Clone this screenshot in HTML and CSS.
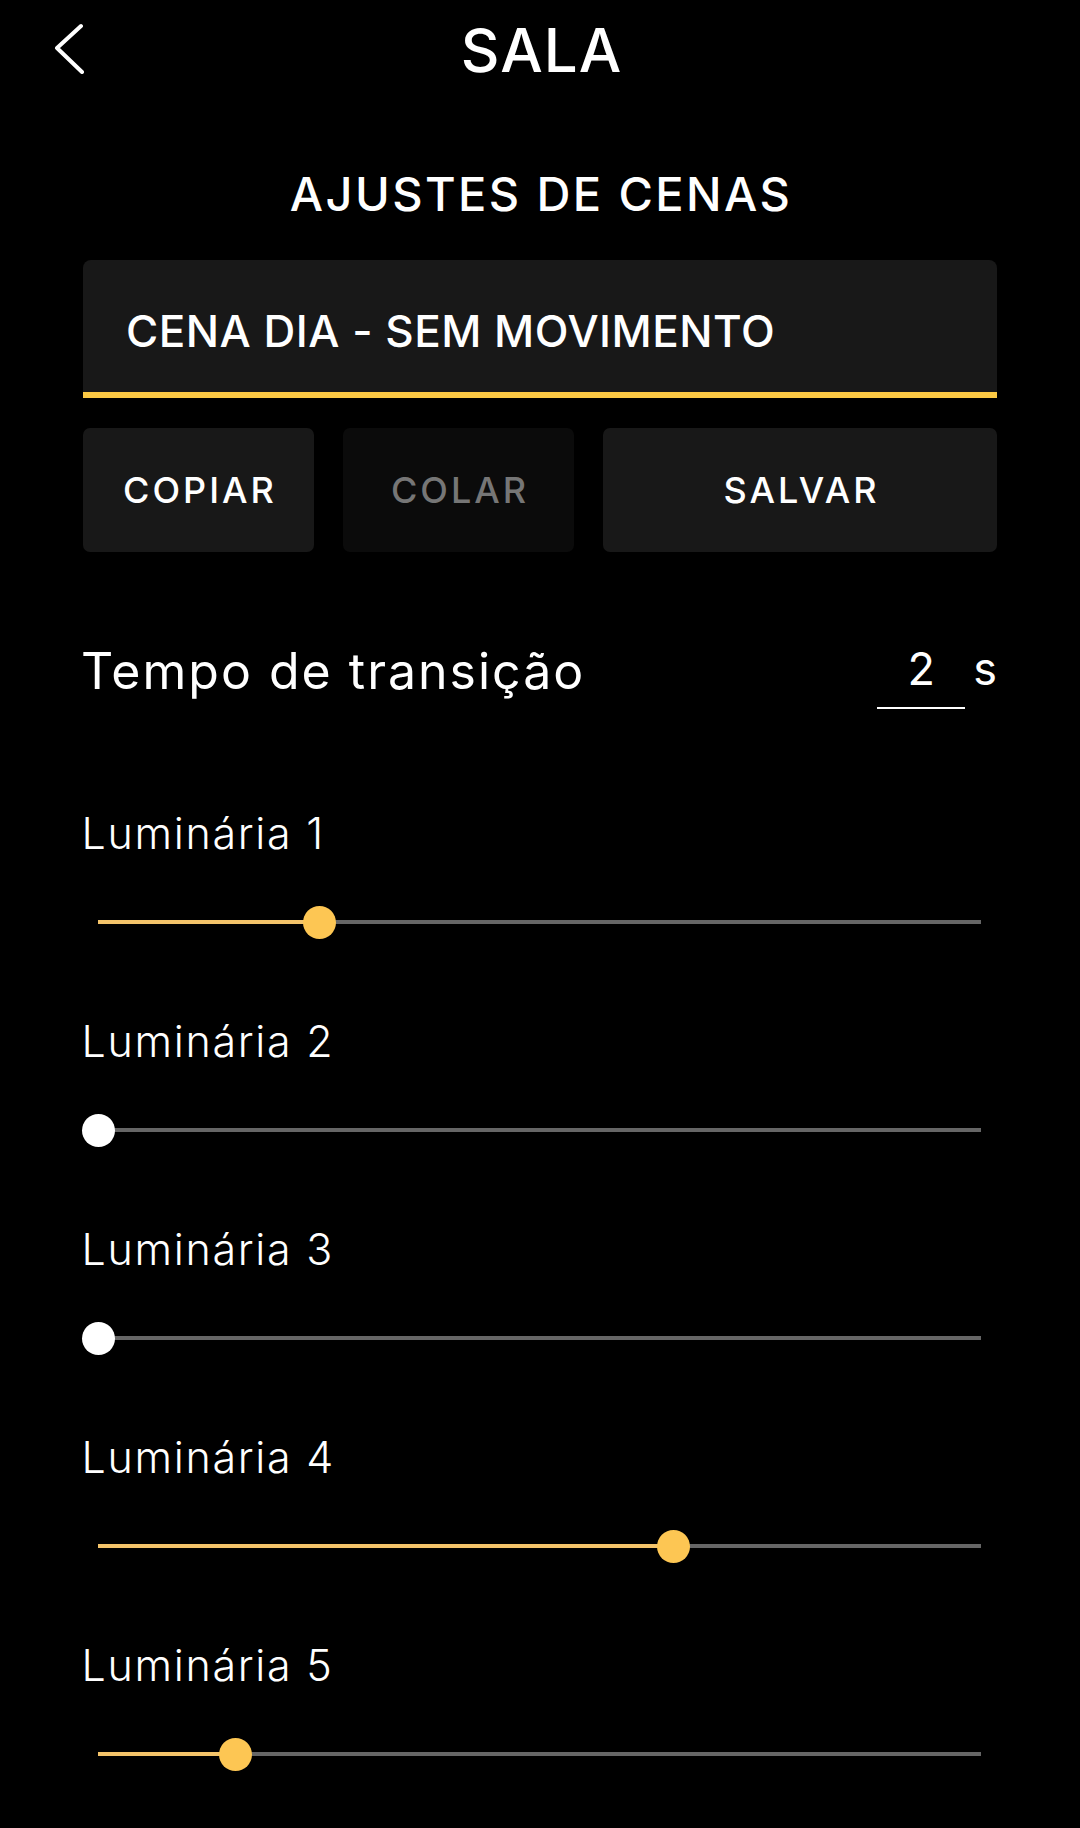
FILE: index.html
```html
<!DOCTYPE html>
<html lang="pt-BR">
<head>
<meta charset="utf-8">
<title>Sala - Ajustes de cenas</title>
<link rel="stylesheet" href="styles.css">
</head>
<body>
<div class="screen">
  <header class="topbar">
    <button class="back" aria-label="Voltar">
      <svg class="back-icon" width="34" height="52" viewBox="0 0 34 52"><polyline points="29,4 5,26 30,50" fill="none" stroke="#fff" stroke-width="4" stroke-linecap="round" stroke-linejoin="round"/></svg>
    </button>
    <h1 class="title">SALA</h1>
    <div class="topbar-spacer"></div>
  </header>

  <h2 class="section-title">AJUSTES DE CENAS</h2>

  <div class="scene-name">CENA DIA - SEM MOVIMENTO</div>

  <div class="actions">
    <button class="btn btn-small">COPIAR</button>
    <button class="btn btn-small btn-disabled">COLAR</button>
    <button class="btn btn-wide">SALVAR</button>
  </div>

  <div class="transition-row">
    <span class="transition-label">Tempo de transição</span>
    <span class="transition-value">
      <span class="value-input">2</span>
      <span class="unit">s</span>
    </span>
  </div>

  <div class="lights">
    <div class="light">
      <div class="light-label">Luminária 1</div>
      <div class="slider"><div class="track"><div class="fill" style="width:25.1%"></div><div class="thumb thumb-on" style="left:25.1%"></div></div></div>
    </div>
    <div class="light">
      <div class="light-label">Luminária 2</div>
      <div class="slider"><div class="track"><div class="fill" style="width:0%"></div><div class="thumb thumb-off" style="left:0%"></div></div></div>
    </div>
    <div class="light">
      <div class="light-label">Luminária 3</div>
      <div class="slider"><div class="track"><div class="fill" style="width:0%"></div><div class="thumb thumb-off" style="left:0%"></div></div></div>
    </div>
    <div class="light">
      <div class="light-label">Luminária 4</div>
      <div class="slider"><div class="track"><div class="fill" style="width:65.2%"></div><div class="thumb thumb-on" style="left:65.2%"></div></div></div>
    </div>
    <div class="light">
      <div class="light-label">Luminária 5</div>
      <div class="slider"><div class="track"><div class="fill" style="width:15.6%"></div><div class="thumb thumb-on" style="left:15.6%"></div></div></div>
    </div>
  </div>
</div>
</body>
</html>
```

FILE: styles.css
```css
* { box-sizing: border-box; }

html, body {
  margin: 0;
  padding: 0;
  background: #000;
}

body {
  font-family: Inter, "Noto Sans", sans-serif;
  color: #fff;
}

.screen {
  width: 1080px;
  min-height: 1828px;
  background: #000;
  padding: 0 83px;
  overflow: hidden;
}

/* Top bar */
.topbar {
  display: grid;
  grid-template-columns: 1fr auto 1fr;
  align-items: center;
  height: 100px;
  margin: 0 -83px;
}

.back {
  justify-self: start;
  background: none;
  border: 0;
  padding: 0;
  margin: 0 0 4px 52px;
  width: 34px;
  height: 52px;
  cursor: pointer;
}

.back-icon { display: block; }

.title {
  margin: 0;
  font-size: 60px;
  line-height: 60px;
  font-weight: 500;
  letter-spacing: 1px;
  padding-left: 3px;
}

/* Section title */
.section-title {
  margin: 64px 0 0;
  text-align: center;
  font-size: 47px;
  line-height: 60px;
  font-weight: 500;
  letter-spacing: 2.4px;
  padding-left: 2px;
}

/* Scene name field */
.scene-name {
  margin-top: 36px;
  height: 138px;
  background: #181818;
  border-radius: 8px 8px 0 0;
  border-bottom: 6px solid #fcc944;
  padding: 49px 45px 0 43px;
  font-size: 44px;
  line-height: 44px;
  font-weight: 500;
  letter-spacing: 0.5px;
}

/* Action buttons */
.actions {
  display: flex;
  gap: 29px;
  margin-top: 30px;
}

.btn {
  height: 124px;
  border: 0;
  border-radius: 7px;
  background: #181818;
  color: #fff;
  font-family: inherit;
  font-size: 36px;
  font-weight: 500;
  letter-spacing: 3px;
  padding: 0 0 0 3px;
}

.btn-small { width: 231px; flex: none; }
.btn-wide { flex: 1; }

.btn-disabled {
  background: #0b0b0b;
  color: #767676;
}

/* Transition time */
.transition-row {
  display: flex;
  justify-content: space-between;
  align-items: flex-start;
  margin-top: 89px;
}

.transition-label {
  font-size: 50px;
  line-height: 60px;
  font-weight: 400;
  letter-spacing: 2px;
  margin-left: -2px;
}

.transition-value {
  display: flex;
  align-items: flex-start;
}

.value-input {
  display: block;
  width: 88px;
  text-align: center;
  font-size: 45px;
  line-height: 56px;
  padding-bottom: 10px;
  border-bottom: 2px solid #fff;
}

.unit {
  display: block;
  margin-left: 8px;
  font-size: 45px;
  line-height: 56px;
}

/* Lights */
.lights {
  display: flex;
  flex-direction: column;
  gap: 30px;
  margin-top: 99px;
}

.light-label {
  font-size: 43px;
  line-height: 50px;
  font-weight: 300;
  letter-spacing: 1.7px;
  margin-left: -1.5px;
}

.slider {
  height: 128px;
  display: flex;
  align-items: center;
  padding: 0 16px 0 15px;
}

.track {
  position: relative;
  flex: 1;
  height: 4px;
  background: #666;
}

.fill {
  height: 100%;
  background: #f4c46a;
}

.thumb {
  position: absolute;
  top: 50%;
  width: 33px;
  height: 33px;
  margin: -16.5px 0 0 -16.5px;
  border-radius: 50%;
}

.thumb-on { background: #fdc653; }
.thumb-off { background: #fff; }
```
